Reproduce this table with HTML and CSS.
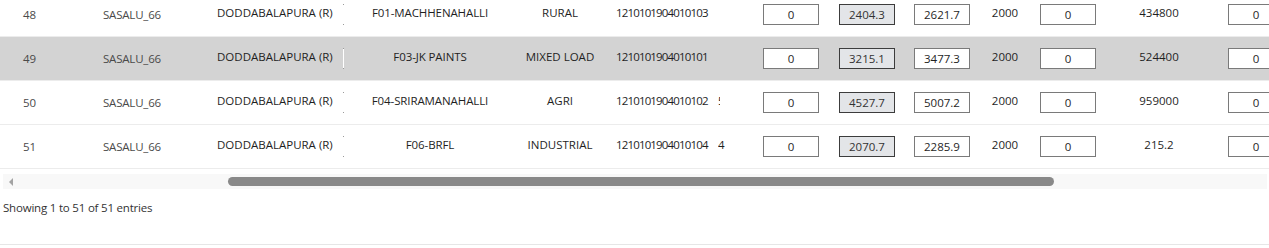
FILE: index.html
```html
<!DOCTYPE html>
<html>
<head>
<meta charset="utf-8">
<link rel="stylesheet" href="styles.css">
</head>
<body>
<div class="wrap">
  <div class="table">
    <div class="row">
      <div class="c c-num">48</div>
      <div class="c c-sub">SASALU_66</div>
      <div class="c c-town up">DODDABALAPURA (R)</div>
      <div class="c c-tick"><span class="tick"></span></div>
      <div class="c c-feeder up">F01-MACHHENAHALLI</div>
      <div class="c c-type up">RURAL</div>
      <div class="c c-code up">1210101904010103</div>
      <div class="c c-clip up"></div>
      <div class="c c-in1"><input class="inp" value="0"></div>
      <div class="c c-in2"><input class="inp dis" value="2404.3" disabled></div>
      <div class="c c-in3"><input class="inp" value="2621.7"></div>
      <div class="c c-val up">2000</div>
      <div class="c c-in4"><input class="inp" value="0"></div>
      <div class="c c-amt up">434800</div>
      <div class="c c-in5"><input class="inp" value="0"></div>
    </div>
    <div class="row alt">
      <div class="c c-num">49</div>
      <div class="c c-sub">SASALU_66</div>
      <div class="c c-town up">DODDABALAPURA (R)</div>
      <div class="c c-tick"><span class="tick"></span></div>
      <div class="c c-feeder up">F03-JK PAINTS</div>
      <div class="c c-type up">MIXED LOAD</div>
      <div class="c c-code up">1210101904010101</div>
      <div class="c c-clip up"></div>
      <div class="c c-in1"><input class="inp" value="0"></div>
      <div class="c c-in2"><input class="inp dis" value="3215.1" disabled></div>
      <div class="c c-in3"><input class="inp" value="3477.3"></div>
      <div class="c c-val up">2000</div>
      <div class="c c-in4"><input class="inp" value="0"></div>
      <div class="c c-amt up">524400</div>
      <div class="c c-in5"><input class="inp" value="0"></div>
    </div>
    <div class="row">
      <div class="c c-num">50</div>
      <div class="c c-sub">SASALU_66</div>
      <div class="c c-town up">DODDABALAPURA (R)</div>
      <div class="c c-tick"><span class="tick"></span></div>
      <div class="c c-feeder up">F04-SRIRAMANAHALLI</div>
      <div class="c c-type up">AGRI</div>
      <div class="c c-code up">1210101904010102</div>
      <div class="c c-clip up"><span class="clipped narrow">5</span></div>
      <div class="c c-in1"><input class="inp" value="0"></div>
      <div class="c c-in2"><input class="inp dis" value="4527.7" disabled></div>
      <div class="c c-in3"><input class="inp" value="5007.2"></div>
      <div class="c c-val up">2000</div>
      <div class="c c-in4"><input class="inp" value="0"></div>
      <div class="c c-amt up">959000</div>
      <div class="c c-in5"><input class="inp" value="0"></div>
    </div>
    <div class="row">
      <div class="c c-num">51</div>
      <div class="c c-sub">SASALU_66</div>
      <div class="c c-town up">DODDABALAPURA (R)</div>
      <div class="c c-tick"><span class="tick"></span></div>
      <div class="c c-feeder up">F06-BRFL</div>
      <div class="c c-type up">INDUSTRIAL</div>
      <div class="c c-code up">1210101904010104</div>
      <div class="c c-clip up"><span class="clipped">4</span></div>
      <div class="c c-in1"><input class="inp" value="0"></div>
      <div class="c c-in2"><input class="inp dis" value="2070.7" disabled></div>
      <div class="c c-in3"><input class="inp" value="2285.9"></div>
      <div class="c c-val up">2000</div>
      <div class="c c-in4"><input class="inp" value="0"></div>
      <div class="c c-amt up">215.2</div>
      <div class="c c-in5"><input class="inp" value="0"></div>
    </div>
  </div>
  <div class="hscroll">
    <span class="arrow"></span>
    <div class="thumb"></div>
  </div>
  <div class="info">Showing 1 to 51 of 51 entries</div>
</div>
</body>
</html>
```
FILE: styles.css
```css
html, body {
  margin: 0;
  padding: 0;
  background: #fff;
}
body {
  font-family: "Open Sans", "Noto Sans", sans-serif;
  font-size: 11.5px;
  color: #212529;
  overflow: hidden;
}
.wrap {
  width: 1269px;
  height: 245px;
  overflow: hidden;
  border-bottom: 1px solid #e6e6e6;
  box-sizing: border-box;
}
.table {
  margin-top: -7px;
  overflow: hidden;
}
.row {
  display: flex;
  height: 43px;
  border-bottom: 1px solid #ececec;
  width: 1300px;
}
.row.alt {
  background: #d3d3d3;
}
.c {
  flex: none;
  display: flex;
  align-items: center;
  box-sizing: border-box;
  white-space: nowrap;
  color: #1f1f1f;
}
.c.up {
  padding-bottom: 5px;
}
.c-num { width: 80px; padding-left: 23px; color: #4a4a4a; }
.c-sub { width: 120px; padding-left: 23px; color: #4a4a4a; letter-spacing: -0.2px; }
.c-town { width: 142px; padding-left: 17px; }
.c-tick { width: 3px; justify-content: center; }
.tick {
  display: block;
  width: 1px;
  height: 19px;
  background: #fff;
  border-top: 1px solid #9a9a9a;
  border-bottom: 1px solid #9a9a9a;
}
.c-feeder { width: 170px; justify-content: center; letter-spacing: -0.1px; }
.c-type { width: 90px; justify-content: center; }
.c-code { width: 113px; padding-left: 11px; letter-spacing: -0.85px; }
.c-clip { width: 39px; }
.clipped {
  display: block;
  width: 8px;
  overflow: hidden;
}
.clipped.narrow { width: 2px; }
.c-in1 { width: 68px; justify-content: center; }
.c-in2 { width: 84px; justify-content: center; }
.c-in3 { width: 66px; justify-content: center; }
.c-val { width: 60px; justify-content: center; }
.c-in4 { width: 66px; justify-content: center; }
.c-amt { width: 116px; justify-content: center; }
.c-in5 { width: 78px; justify-content: center; }
.inp {
  width: 56px;
  height: 21px;
  box-sizing: border-box;
  border: 1px solid #7a7a7a;
  border-radius: 0;
  background: #fff;
  font-family: "Open Sans", "Noto Sans", sans-serif;
  font-size: 11.5px;
  color: #1f1f1f;
  text-align: center;
  padding: 0 2px;
  margin: 0;
  outline: none;
}
.inp.dis {
  background: #e3e5e8;
  border-color: #3c3c3c;
  color: #333;
}
.hscroll {
  margin-top: 5px;
  height: 15px;
  background: #f8f8f8;
  display: flex;
  align-items: center;
  margin-left: 3px;
  margin-right: 2px;
}
.arrow {
  flex: none;
  width: 0;
  height: 0;
  margin-left: 6px;
  border-top: 4px solid transparent;
  border-bottom: 4px solid transparent;
  border-right: 4px solid #a3a3a3;
}
.thumb {
  flex: none;
  margin-left: 215px;
  width: 826px;
  height: 9px;
  border-radius: 5px;
  background: #898989;
}
.info {
  margin-top: 11px;
  padding-left: 3px;
  color: #333;
  line-height: 16px;
  letter-spacing: -0.2px;
}
```
